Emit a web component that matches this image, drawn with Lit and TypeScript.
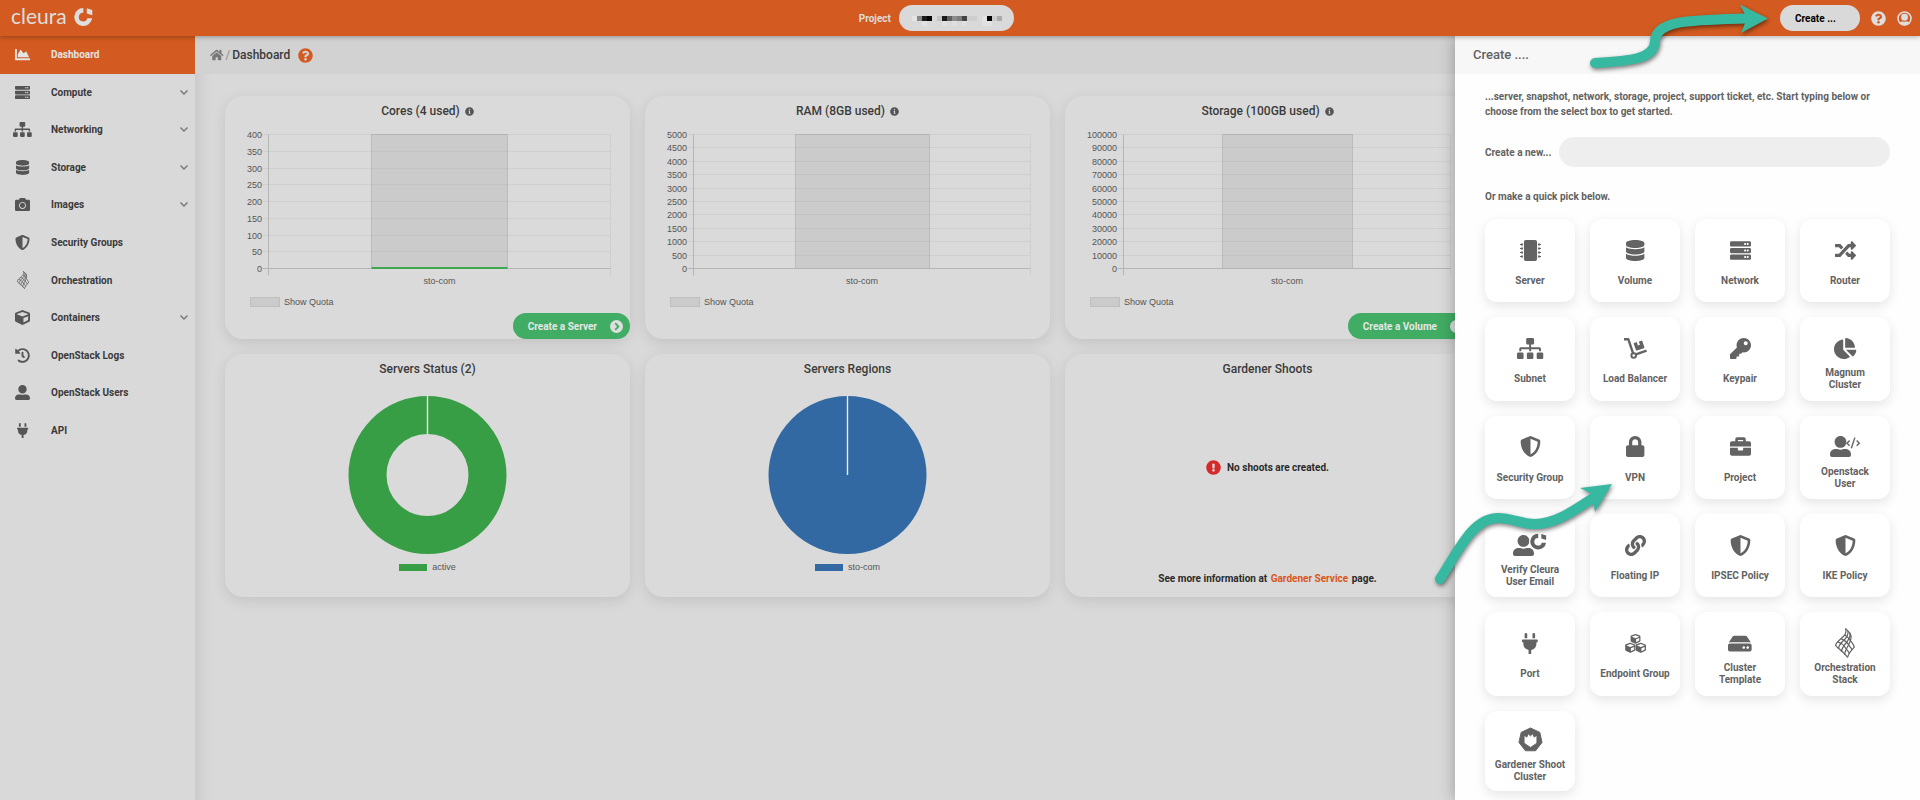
import { LitElement, html, svg, css } from "lit";
import { customElement, property, state } from "lit/decorators.js";
import { classMap } from "lit/directives/class-map.js";

type Glyph = { w: number; h?: number; d?: string; body?: unknown };

const CUBE =
  "M239.1 6.3l-208 78c-18.7 7-31.1 25-31.1 45v225.1c0 18.2 10.3 34.8 26.5 42.9l208 104c13.5 6.8 29.4 6.8 42.9 0l208-104c16.3-8.1 26.5-24.8 26.5-42.9V129.3c0-20-12.4-37.9-31.1-44.9l-208-78C262 2.2 250 2.2 239.1 6.3zM256 68.4l192 72v1.1l-192 78-192-78v-1.1l192-72zm32 356V275.5l160-65v133.9l-160 80z";
const USER =
  "M256 288c79.5 0 144-64.5 144-144S335.5 0 256 0 112 64.5 112 144s64.5 144 144 144zm128 32h-55.1c-22.2 10.2-46.9 16-72.9 16s-50.6-5.8-72.9-16H128C57.3 320 0 377.3 0 448v16c0 26.5 21.5 48 48 48h416c26.5 0 48-21.5 48-48v-16c0-70.7-57.3-128-128-128z";

const serverRow = (y: number) =>
  `M480 ${y + 128}H32c-17.7 0-32-14.3-32-32v-64c0-17.7 14.3-32 32-32h448c17.7 0 32 14.3 32 32v64c0 17.7-14.3 32-32 32zm-48-88c-13.3 0-24 10.7-24 24s10.7 24 24 24 24-10.7 24-24-10.7-24-24-24zm-64 0c-13.3 0-24 10.7-24 24s10.7 24 24 24 24-10.7 24-24-10.7-24-24-24z`;

// The ring with a detached square, used in the brand and as a badge.
const mark = svg`<path d="M9.300 1A9 9 0 1 0 18.200 11.200H13.300A4.300 4.300 0 1 1 9.300 5.800z"/><path d="M12.800 1.300L18.300 3V8.200L12.800 6.600z"/>`;

const GLYPHS: Record<string, Glyph> = {
  area: { w: 512, d: "M500 384c6.6 0 12 5.4 12 12v40c0 6.6-5.4 12-12 12H12c-6.6 0-12-5.4-12-12V76c0-6.6 5.4-12 12-12h40c6.6 0 12 5.4 12 12v308h436zM372.7 159.5L288 216l-85.3-113.7c-5.1-6.8-15.5-6.3-19.9 1L96 248v104h384l-89.9-187.8c-3.2-6.5-11.4-8.7-17.4-4.7z" },
  server: { w: 512, d: serverRow(32) + serverRow(192) + serverRow(352) },
  sitemap: { w: 640, d: "M128 352H32c-17.67 0-32 14.33-32 32v96c0 17.67 14.33 32 32 32h96c17.67 0 32-14.33 32-32v-96c0-17.67-14.33-32-32-32zm-24-80h192v48h48v-48h192v48h48v-57.59c0-21.17-17.23-38.41-38.41-38.41H344v-64h40c17.67 0 32-14.33 32-32V32c0-17.67-14.33-32-32-32H256c-17.67 0-32 14.33-32 32v96c0 17.67 14.33 32 32 32h40v64H94.41C73.23 224 56 241.23 56 262.41V320h48v-48zm264 80h-96c-17.67 0-32 14.33-32 32v96c0 17.67 14.33 32 32 32h96c17.67 0 32-14.33 32-32v-96c0-17.67-14.33-32-32-32zm240 0h-96c-17.67 0-32 14.33-32 32v96c0 17.67 14.33 32 32 32h96c17.67 0 32-14.33 32-32v-96c0-17.67-14.33-32-32-32z" },
  database: { w: 448, d: "M448 73.143v45.714C448 159.143 347.667 192 224 192S0 159.143 0 118.857V73.143C0 32.857 100.333 0 224 0s224 32.857 224 73.143zM448 176v102.857C448 319.143 347.667 352 224 352S0 319.143 0 278.857V176c48.125 33.143 136.208 48.572 224 48.572S399.874 209.143 448 176zm0 160v102.857C448 479.143 347.667 512 224 512S0 479.143 0 438.857V336c48.125 33.143 136.208 48.572 224 48.572S399.874 369.143 448 336z" },
  camera: { w: 512, d: "M512 144v288c0 26.5-21.5 48-48 48H48c-26.5 0-48-21.5-48-48V144c0-26.5 21.5-48 48-48h88l12.3-32.9c7-18.7 24.9-31.1 44.9-31.1h125.5c20 0 37.9 12.4 44.9 31.1L376 96h88c26.5 0 48 21.5 48 48zM376 288c0-66.2-53.8-120-120-120s-120 53.8-120 120 53.8 120 120 120 120-53.8 120-120zm-32 0c0 48.5-39.5 88-88 88s-88-39.5-88-88 39.5-88 88-88 88 39.5 88 88z" },
  shield: { w: 512, d: "M466.5 83.7l-192-80a48.15 48.15 0 0 0-36.9 0l-192 80C27.7 91.1 16 108.6 16 128c0 198.5 114.5 335.7 221.5 380.3 11.8 4.9 25.1 4.9 36.9 0C360.1 472.6 496 349.3 496 128c0-19.4-11.7-36.9-29.5-44.3zM256.1 446.3l-.1-381 175.9 73.3c-3.3 151.4-82.1 261.1-175.8 307.7z" },
  cube: { w: 512, d: CUBE },
  cubes: {
    w: 512,
    body: svg`<path d=${CUBE} transform="translate(136 24) scale(.47)"/><path d=${CUBE} transform="translate(4 236) scale(.49)"/><path d=${CUBE} transform="translate(260 236) scale(.49)"/>`,
  },
  history: { w: 512, d: "M504 255.531c.253 136.64-111.18 248.372-247.82 248.468-59.015.042-113.223-20.53-155.822-54.911-11.077-8.94-11.905-25.541-1.839-35.607l11.267-11.267c8.609-8.609 22.353-9.551 31.891-1.984C173.062 425.135 212.781 440 256 440c101.705 0 184-82.311 184-184 0-101.705-82.311-184-184-184-48.814 0-93.149 18.969-126.068 49.932l50.754 50.754c10.08 10.08 2.941 27.314-11.313 27.314H24c-8.837 0-16-7.163-16-16V38.627c0-14.254 17.234-21.393 27.314-11.314l49.372 49.372C129.209 34.136 189.552 8 256 8c136.81 0 247.747 110.78 248 247.531zm-180.912 78.784l9.823-12.63c8.138-10.463 6.253-25.542-4.21-33.679L288 256.349V152c0-13.255-10.745-24-24-24h-16c-13.255 0-24 10.745-24 24v135.651l65.409 50.874c10.463 8.137 25.541 6.253 33.679-4.21z" },
  user: { w: 512, d: USER },
  userCode: {
    w: 740,
    body: svg`<path d=${USER}/><g fill="none" stroke="currentColor" stroke-width="34"><path d="M478 112l-62 64 62 64M650 112l64 64-64 64"/><path d="M606 40L520 300"/></g>`,
  },
  userMark: {
    w: 820,
    body: svg`<path d=${USER}/><circle cx="610" cy="160" r="215" class="halo"/><g transform="translate(415 -54) scale(21.5)">${mark}</g>`,
  },
  plug: { w: 384, d: "M320 32a32 32 0 0 0-64 0v96h64zm48 128H16A16 16 0 0 0 0 176v32a16 16 0 0 0 16 16h16v32a160.07 160.07 0 0 0 128 156.8V512h64v-99.2A160.07 160.07 0 0 0 352 256v-32h16a16 16 0 0 0 16-16v-32a16 16 0 0 0-16-16zM128 32a32 32 0 0 0-64 0v96h64z" },
  question: { w: 512, d: "M504 256c0 136.997-111.043 248-248 248S8 392.997 8 256C8 119.083 119.043 8 256 8s248 111.083 248 248zM262.655 90c-54.497 0-89.255 22.957-116.549 63.758-3.536 5.286-2.353 12.415 2.715 16.258l34.699 26.31c5.205 3.947 12.621 3.008 16.665-2.122 17.864-22.658 30.113-35.797 57.303-35.797 20.429 0 45.698 13.148 45.698 32.958 0 14.976-12.363 22.667-32.534 33.976C247.128 238.528 216 254.941 216 296v4c0 6.627 5.373 12 12 12h56c6.627 0 12-5.373 12-12v-1.333c0-28.462 83.186-29.647 83.186-106.667 0-58.002-60.165-102-116.531-102zM256 338c-25.365 0-46 20.635-46 46 0 25.364 20.635 46 46 46s46-20.636 46-46c0-25.365-20.635-46-46-46z" },
  info: { w: 512, d: "M256 8C119.043 8 8 119.083 8 256c0 136.997 111.043 248 248 248s248-111.003 248-248C504 119.083 392.957 8 256 8zm0 110c23.196 0 42 18.804 42 42s-18.804 42-42 42-42-18.804-42-42 18.804-42 42-42zm56 254c0 6.627-5.373 12-12 12h-88c-6.627 0-12-5.373-12-12v-24c0-6.627 5.373-12 12-12h12v-64h-12c-6.627 0-12-5.373-12-12v-24c0-6.627 5.373-12 12-12h64c6.627 0 12 5.373 12 12v100h12c6.627 0 12 5.373 12 12v24z" },
  alert: { w: 512, d: "M504 256c0 136.997-111.043 248-248 248S8 392.997 8 256C8 119.083 119.043 8 256 8s248 111.083 248 248zm-248 50c-25.405 0-46 20.595-46 46s20.595 46 46 46 46-20.595 46-46-20.595-46-46-46zm-43.673-165.346l7.418 136c.347 6.364 5.609 11.346 11.982 11.346h48.546c6.373 0 11.635-4.982 11.982-11.346l7.418-136c.375-6.874-5.098-12.654-11.982-12.654h-63.383c-6.884 0-12.356 5.78-11.981 12.654z" },
  account: {
    w: 512,
    body: svg`<circle cx="256" cy="256" r="222" fill="none" stroke="currentColor" stroke-width="52"/><circle cx="256" cy="212" r="118"/><path d="M70 410C110 366 160 350 200 356Q256 376 312 356C352 350 402 366 442 410A248 248 0 0 1 70 410z"/>`,
  },
  home: { w: 576, d: "M280.37 148.26L96 300.11V464a16 16 0 0 0 16 16l112.06-.29a16 16 0 0 0 15.92-16V368a16 16 0 0 1 16-16h64a16 16 0 0 1 16 16v95.64a16 16 0 0 0 16 16.05L464 480a16 16 0 0 0 16-16V300L295.67 148.26a12.19 12.19 0 0 0-15.3 0zM571.6 251.47L488 182.56V44.05a12 12 0 0 0-12-12h-56a12 12 0 0 0-12 12v72.61L318.47 43a48 48 0 0 0-61 0L4.34 251.47a12 12 0 0 0-1.6 16.9l25.5 31A12 12 0 0 0 45.15 301l235.22-193.74a12.19 12.19 0 0 1 15.3 0L530.9 301a12 12 0 0 0 16.9-1.6l25.5-31a12 12 0 0 0-1.7-16.93z" },
  chip: {
    w: 512,
    body: svg`<rect x="96" width="320" height="512" rx="48"/>${[88, 184, 280, 376].map(
      (y) => svg`<path d="M72 ${y}H30q-6 0-6 6v6H6q-6 0-6 6v12q0 6 6 6h18v6q0 6 6 6h42zM440 ${y}h42q6 0 6 6v6h18q6 0 6 6v12q0 6-6 6h-18v6q0 6-6 6h-42z"/>`,
    )}`,
  },
  random: { w: 512, d: "M504.971 359.029c9.373 9.373 9.373 24.569 0 33.941l-80 79.984c-15.01 15.01-40.971 4.49-40.971-16.971V416h-58.785a12.004 12.004 0 0 1-8.773-3.812l-70.556-75.596 53.333-57.143L352 336h32v-39.981c0-21.438 25.943-31.998 40.971-16.971l80 79.981zM12 176h84l52.781 56.551 53.333-57.143-70.556-75.596A11.999 11.999 0 0 0 122.785 96H12c-6.627 0-12 5.373-12 12v56c0 6.627 5.373 12 12 12zm372 0v39.984c0 21.46 25.961 31.98 40.971 16.971l80-79.984c9.373-9.373 9.373-24.569 0-33.941l-80-79.981C409.943 24.021 384 34.582 384 56.019V96h-58.785a12.004 12.004 0 0 0-8.773 3.812L96 336H12c-6.627 0-12 5.373-12 12v56c0 6.627 5.373 12 12 12h110.785c3.326 0 6.503-1.381 8.773-3.812L352 176h32z" },
  dolly: {
    w: 560,
    body: svg`<g fill="none" stroke="currentColor" stroke-width="58" stroke-linejoin="round"><path d="M0 30h104l120 350"/><circle cx="236" cy="426" r="56" stroke-width="48"/><path d="M290 400L550 308"/></g><path d="M248 122l64-22 26 82 50-16-26-82 62-20q16-5 22 11l50 150q5 16-11 22l-172 58q-16 5-22-11l-52-150q-5-16 9-22z"/>`,
  },
  key: { w: 512, d: "M512 176.001C512 273.203 433.202 352 336 352c-11.22 0-22.19-1.062-32.827-3.069l-24.012 27.014A23.999 23.999 0 0 1 261.223 384H224v40c0 13.255-10.745 24-24 24h-40v40c0 13.255-10.745 24-24 24H24c-13.255 0-24-10.745-24-24v-78.059c0-6.365 2.529-12.47 7.029-16.971l161.802-161.802C163.108 213.814 160 195.271 160 176 160 78.798 238.797.001 335.999 0 433.488-.001 512 78.511 512 176.001zM336 128c0 26.51 21.49 48 48 48s48-21.49 48-48-21.49-48-48-48-48 21.49-48 48z" },
  pie: { w: 544, d: "M527.79 288H290.5l158.03 158.03c6.04 6.04 15.98 6.53 22.19.68 38.7-36.46 65.32-85.61 73.13-140.86 1.34-9.46-6.51-17.85-16.06-17.85zm-15.83-64.8C503.72 103.74 408.26 8.28 288.8.04 279.68-.59 272 7.1 272 16.24V240h223.77c9.14 0 16.82-7.68 16.19-16.8zM224 288V50.71c0-9.55-8.39-17.4-17.84-16.06C86.99 51.49-4.1 155.6.14 280.37 4.5 408.51 114.83 513.59 243.03 511.98c50.4-.63 96.97-16.87 135.26-44.03 7.9-5.6 8.42-17.23 1.57-24.08L224 288z" },
  lock: { w: 448, d: "M400 224h-24v-72C376 68.2 307.8 0 224 0S72 68.2 72 152v72H48c-26.5 0-48 21.5-48 48v192c0 26.5 21.5 48 48 48h352c26.5 0 48-21.5 48-48V272c0-26.5-21.5-48-48-48zm-104 0H152v-72c0-39.7 32.3-72 72-72s72 32.3 72 72v72z" },
  briefcase: { w: 512, d: "M320 336c0 8.84-7.16 16-16 16h-96c-8.84 0-16-7.16-16-16v-48H0v144c0 25.6 22.4 48 48 48h416c25.6 0 48-22.4 48-48V288H320v48zm144-208h-80V80c0-25.6-22.4-48-48-48H176c-25.6 0-48 22.4-48 48v48H48c-25.6 0-48 22.4-48 48v80h512v-80c0-25.6-22.4-48-48-48zm-144 0H192V96h128v32z" },
  link: { w: 512, d: "M326.612 185.391c59.747 59.809 58.927 155.698.36 214.59-.11.12-.24.25-.36.37l-67.2 67.2c-59.27 59.27-155.699 59.262-214.96 0-59.27-59.26-59.27-155.7 0-214.96l37.106-37.106c9.84-9.84 26.786-3.3 27.294 10.606.648 17.722 3.826 35.527 9.69 52.721 1.986 5.822.567 12.262-3.783 16.612l-13.087 13.087c-28.026 28.026-28.905 73.66-1.155 101.96 28.024 28.579 74.086 28.749 102.325.51l67.2-67.19c28.191-28.191 28.073-73.757 0-101.83-3.701-3.694-7.429-6.564-10.341-8.569a16.037 16.037 0 0 1-6.947-12.606c-.396-10.567 3.348-21.456 11.698-29.806l21.054-21.055c5.521-5.521 14.182-6.199 20.584-1.731a152.482 152.482 0 0 1 20.522 17.197zM467.547 44.449c-59.261-59.262-155.69-59.27-214.96 0l-67.2 67.2c-.12.12-.25.25-.36.37-58.566 58.892-59.387 154.781.36 214.59a152.454 152.454 0 0 0 20.521 17.196c6.402 4.468 15.064 3.789 20.584-1.731l21.054-21.055c8.35-8.35 12.094-19.239 11.698-29.806a16.037 16.037 0 0 0-6.947-12.606c-2.912-2.005-6.64-4.875-10.341-8.569-28.073-28.073-28.191-73.639 0-101.83l67.2-67.19c28.239-28.239 74.3-28.069 102.325.51 27.75 28.3 26.872 73.934-1.155 101.96l-13.087 13.087c-4.35 4.35-5.769 10.79-3.783 16.612 5.864 17.194 9.042 34.999 9.69 52.721.509 13.906 17.454 20.446 27.294 10.606l37.106-37.106c59.271-59.259 59.271-155.699.001-214.959z" },
  disk: { w: 576, d: "M576 304v96c0 26.51-21.49 48-48 48H48c-26.51 0-48-21.49-48-48v-96c0-26.51 21.49-48 48-48h480c26.51 0 48 21.49 48 48zm-48-80a79.557 79.557 0 0 1 30.777 6.165L462.25 85.374A48.003 48.003 0 0 0 422.311 64H153.689a48 48 0 0 0-39.938 21.374L17.223 230.165A79.557 79.557 0 0 1 48 224h480zm-48 96c-17.673 0-32 14.327-32 32s14.327 32 32 32 32-14.327 32-32-14.327-32-32-32zm-96 0c-17.673 0-32 14.327-32 32s14.327 32 32 32 32-14.327 32-32-14.327-32-32-32z" },
  flame: {
    w: 20,
    h: 30,
    body: svg`<g fill="none" stroke="currentColor" stroke-width="1.2" stroke-linejoin="round">
      <path d="M10.5 .6C12.5 5 9.500 8 5 11.500C2 14 .6 15.500 .6 18"/>
      <path d="M12.800 2.600C14.200 7 11 10.500 7.500 13.500C5 16 3.600 18 3.400 21"/>
      <path d="M14.800 4.600C16 9 13.500 12 11 15C8.500 18 6.600 20.500 6.400 24"/>
      <path d="M16 7.500C16.400 11 15 14 13.500 17C11.500 20.500 9.800 23.500 9.500 27"/>
      <path d="M19.300 19C17 22 13.500 25 12.600 29.400"/>
      <path d="M10.5 .6C14 3.500 15.800 5.500 16 8.500"/>
      <path d="M9.800 7C12 8.500 14 10 15.400 12.500C17 15 19 16.500 19.300 19.500"/>
      <path d="M6 10.600C9 12 12 14 13.600 16.600C15 19 16.800 20.500 17.200 22"/>
      <path d="M2.600 13.800C6 15 9 17.500 10.600 20C12 22.500 14 24 14.400 25.500"/>
      <path d="M.6 17.500C3 20.500 9.500 24.500 12.600 29.400"/>
    </g>`,
  },
  gardener: {
    w: 26,
    h: 26,
    body: svg`<path fill-rule="evenodd" stroke="currentColor" stroke-linejoin="round" d="M13 1L22.700 5.600 25 16 18.300 24.700H7.700L1 16 3.300 5.600zM6.300 8.500V16.800L13 21.300 19.700 16.800V8.500L16.800 10.500 15.400 7 13 9.200 10.600 7 9.200 10.500z"/>`,
  },
};

const icon = (name: string, cls = "") => {
  const g = GLYPHS[name];
  return html`<svg class="icon ${cls}" viewBox="0 0 ${g.w} ${g.h ?? 512}" aria-hidden="true" fill="currentColor">
    ${g.body ?? svg`<path d=${g.d}/>`}
  </svg>`;
};

const base = css`
  * { box-sizing: border-box; }
  .icon { display: block; flex: none; width: auto; overflow: visible; }
  button, input { font: inherit; color: inherit; border: 0; margin: 0; }
  button { cursor: pointer; }
  a { color: inherit; text-decoration: none; }
`;

@customElement("side-nav")
class SideNav extends LitElement {
  @state() current = "Dashboard";
  items: [string, string, boolean][] = [
    ["area", "Dashboard", false],
    ["server", "Compute", true],
    ["sitemap", "Networking", true],
    ["database", "Storage", true],
    ["camera", "Images", true],
    ["shield", "Security Groups", false],
    ["flame", "Orchestration", false],
    ["cube", "Containers", true],
    ["history", "OpenStack Logs", false],
    ["user", "OpenStack Users", false],
    ["plug", "API", false],
  ];
  static styles = [base, css`
    :host { display: block; background: #d9d9d9; color: #3a3a3a; }
    .list { display: grid; grid-auto-rows: 1fr; min-height: 413px; }
    .item { display: grid; grid-template-columns: 45px 1fr auto; column-gap: 6px; align-items: center; padding-right: 7px; }
    .item.on { background: #d35b21; color: #e4e4e4; }
    .icon { height: 15px; justify-self: center; color: #555; }
    .item.on .icon { color: #e4e4e4; }
    .icon.flame { height: 18px; }
    .chev { width: 8px; height: 5px; fill: none; stroke: #777; stroke-width: 1.4; }
  `];
  render() {
    return html`<nav class="list" aria-label="Main">
      ${this.items.map(([g, label, more]) => html`
        <a href="#" class=${classMap({ item: true, on: label === this.current })}>
          ${icon(g, g)}<span>${label}</span>
          ${more ? html`<svg class="chev" viewBox="0 0 8 5" aria-hidden="true"><path d="M.5 .5L4 4 7.500 .5"/></svg>` : ""}
        </a>`)}
    </nav>`;
  }
}

@customElement("quota-chart")
class QuotaChart extends LitElement {
  @property({ type: Number }) max = 400;
  @property({ type: Number }) step = 50;
  @property({ type: Number }) left = 44;
  @property({ type: Number }) used = 0;
  static styles = [base, css`
    :host { display: block; }
    .plot { display: block; width: 100%; font: 9px "Liberation Sans", Arial, sans-serif; fill: #555; }
    .grid { stroke: #cfcfcf; }
    .axis { stroke: #b4b6b4; }
    .bar { fill: #cbcbcb; stroke: #bcbcbc; }
    .over { stroke: #000; stroke-opacity: 0.04; }
    .used { fill: #3fa652; }
    .legend { display: flex; align-items: center; gap: 4px; margin: 6px 0 0 25px; font: 9px/10px "Liberation Sans", Arial, sans-serif; color: #555; }
    .swatch { width: 30px; height: 10px; background: #cbcbcb; border: 1px solid #bfbfbf; }
  `];
  render() {
    const top = 8.5, bottom = 142.5, right = 385.5, left = this.left - 0.5;
    const w = right - left, n = this.max / this.step;
    const ticks = Array.from({ length: n + 1 }, (_, i) => ({
      v: this.max - i * this.step,
      y: Math.round(top + ((bottom - top) * i) / n - 0.5) + 0.5,
    }));
    const bx = Math.round(left + w * 0.3) + 0.5, bw = Math.round(w * 0.4) - 1;
    return html`
      <svg class="plot" viewBox="0 0 405 165" role="img" aria-label="Quota for sto-com">
        ${ticks.map((t) => svg`<path class="grid" d="M${left - 6} ${t.y}H${right}"/><text x=${left - 6.5} y=${t.y + 3} text-anchor="end">${t.v}</text>`)}
        <path class="grid" d="M${right} ${top}V${bottom + 7}"/>
        <rect class="bar" x=${bx} y=${top} width=${bw} height=${bottom - top}/>
        ${ticks.map((t) => svg`<path class="over" d="M${bx} ${t.y}h${bw}"/>`)}
        <path class="axis" d="M${left} ${top}V${bottom + 7}M${left - 6} ${bottom}H${right}"/>
        <rect class="used" x=${bx} y=${bottom - this.used + 0.5} width=${bw} height=${this.used}/>
        <text x=${left + w / 2} y="158" text-anchor="middle">sto-com</text>
      </svg>
      <div class="legend"><span class="swatch"></span>Show Quota</div>`;
  }
}

@customElement("round-chart")
class RoundChart extends LitElement {
  @property() color = "#389e45";
  @property() label = "";
  @property({ type: Number }) hole = 0;
  static styles = [base, css`
    :host { display: block; }
    .plot { display: block; width: 100%; }
    .cut { stroke: #ececec; stroke-width: 1.4; }
    .legend { display: flex; justify-content: center; align-items: center; gap: 5px; margin-top: 6px; font: 9px/10px "Liberation Sans", Arial, sans-serif; color: #555; }
    .swatch { width: 28px; height: 7px; }
  `];
  render() {
    const r = (79 + this.hole) / 2, t = 79 - this.hole;
    return html`
      <svg class="plot" viewBox="0 0 405 172" role="img" aria-label=${this.label}>
        <circle cx="202.5" cy="91" r=${r} fill="none" stroke=${this.color} stroke-width=${t}/>
        <path class="cut" d="M202.500 12V${91 - this.hole}"/>
      </svg>
      <div class="legend"><span class="swatch" style="background:${this.color}"></span>${this.label}</div>`;
  }
}

@customElement("create-panel")
class CreatePanel extends LitElement {
  tiles: [string, string][] = [
    ["chip", "Server"], ["database", "Volume"], ["server", "Network"], ["random", "Router"],
    ["sitemap", "Subnet"], ["dolly", "Load Balancer"], ["key", "Keypair"], ["pie", "Magnum\nCluster"],
    ["shield", "Security Group"], ["lock", "VPN"], ["briefcase", "Project"], ["userCode", "Openstack\nUser"],
    ["userMark", "Verify Cleura\nUser Email"], ["link", "Floating IP"], ["shield", "IPSEC Policy"], ["shield", "IKE Policy"],
    ["plug", "Port"], ["cubes", "Endpoint Group"], ["disk", "Cluster\nTemplate"], ["flame", "Orchestration\nStack"],
    ["gardener", "Gardener Shoot\nCluster"],
  ];
  static styles = [base, css`
    :host { display: block; background: #fefefe; color: #626262; box-shadow: 0 0 15px rgba(0, 0, 0, 0.3); }
    .head { margin: 0; padding: 0 18px; background: #f7f7f7; font-size: 13px; line-height: 38px; font-weight: 500; }
    .body { padding: 15px 30px 0; }
    .intro { margin: 0 0 18px; line-height: 15px; }
    .field { display: flex; align-items: center; gap: 8px; margin-bottom: 22px; }
    .input { flex: 1; min-width: 0; height: 30px; padding: 0 15px; border-radius: 15px; background: #eee; outline: 0; }
    .hint { margin: 0 0 15px; line-height: 15px; }
    .grid { display: grid; grid-template-columns: repeat(4, 1fr); grid-auto-rows: 1fr; gap: 15px; min-height: 575px; }
    .tile { display: flex; flex-direction: column; align-items: center; padding: 13px 4px 9px; border-radius: 12px; background: #fff; box-shadow: 0 4px 12px rgba(0, 0, 0, 0.1); text-align: center; }
    .tile:last-child { align-self: start; padding: 11px 4px 8px; }
    .slot { display: flex; align-items: center; justify-content: center; height: 36px; color: #636363; }
    .icon { height: 21px; }
    .icon.flame { height: 30px; }
    .icon.gardener { height: 25px; }
    .halo { fill: #fff; }
    .name { display: flex; align-items: center; min-height: 24px; margin-top: 1px; line-height: 12px; white-space: pre-line; }
  `];
  render() {
    return html`
      <h2 class="head">Create ....</h2>
      <div class="body">
        <p class="intro">...server, snapshot, network, storage, project, support ticket, etc. Start typing below or choose from the select box to get started.</p>
        <div class="field"><label for="kind">Create a new...</label><input id="kind" class="input" type="text" /></div>
        <p class="hint">Or make a quick pick below.</p>
        <div class="grid">
          ${this.tiles.map(([g, name]) => html`<button class="tile"><span class="slot">${icon(g, g)}</span><span class="name">${name}</span></button>`)}
        </div>
      </div>`;
  }
}

// Grey levels of the obscured project name, one cell per 5px block: [column, row, shade].
const MOSAIC: [number, number, string][] = [
  [0, 1, "#e4e4e4"], [1, 1, "#888"], [2, 1, "#1c1c1c"], [3, 1, "#060606"], [2, 2, "#e2e2e2"],
  [5, 1, "#c4c4c4"], [6, 1, "#1a1a1a"], [7, 1, "#606060"], [8, 1, "#8c8c8c"], [9, 1, "#7e7e7e"], [10, 1, "#444"],
  [11, 1, "#cecece"], [12, 1, "#cecece"], [6, 2, "#e0e0e0"], [8, 2, "#e0e0e0"], [10, 2, "#e0e0e0"],
  [14, 1, "#e2e2e2"], [15, 1, "#000"], [16, 1, "#ccc"], [17, 1, "#aaa"], [14, 2, "#e0e0e0"], [15, 2, "#e2e2e2"],
];

@customElement("app-root")
class AppRoot extends LitElement {
  static styles = [base, css`
    :host { display: block; font: 700 10px/15px Roboto, "Liberation Sans", sans-serif; color: #3a3a3a; }
    .app { position: relative; display: flex; flex-direction: column; min-height: 100vh; overflow: hidden; background: #d9d9d9; }
    .top { position: relative; z-index: 3; display: flex; justify-content: space-between; align-items: center; height: 36px; padding: 0 8px 0 11px; background: #d35b21; color: #dedede; box-shadow: 0 1px 5px rgba(0, 0, 0, 0.3); }
    .brand { display: flex; align-items: center; gap: 7px; font: 21px/24px Lato, sans-serif; padding-bottom: 4px; }
    .brand .mark { width: 19px; height: 19px; fill: #dedede; }
    .project { display: flex; align-items: center; gap: 8px; }
    .pill { height: 26px; border-radius: 13px; background: #d9d9d9; }
    .name { display: flex; align-items: center; padding: 0 12px 0 13px; }
    .tools { display: flex; align-items: center; justify-content: flex-end; gap: 11px; }
    .tools .icon { height: 15px; }
    .create { width: 80px; padding: 0 15px; text-align: left; color: #000; }
    .ghost { padding: 0; background: none; }
    .body { flex: 1; display: flex; }
    .side { position: relative; width: 195px; flex: none; }
    .main { flex: 1; min-width: 0; box-shadow: inset 18px 0 16px -14px rgba(0, 0, 0, 0.09); }
    .crumbs { display: flex; align-items: center; height: 38px; padding-left: 15px; background: #d2d2d2; font-size: 12px; font-weight: 500; }
    .crumbs .home { height: 12px; color: #777; }
    .crumbs .slash { padding: 0 2px; color: #999; }
    .crumbs .help { height: 15px; margin-left: 8px; color: #d35b21; }
    .cards { display: grid; grid-template-columns: repeat(4, 1fr); gap: 15px; padding: 22px 30px; }
    .card { display: flex; flex-direction: column; min-height: 243px; padding-top: 8px; border-radius: 18px; background: #dadada; box-shadow: 0 4px 14px rgba(0, 0, 0, 0.1); }
    .card.first { grid-column-start: 1; }
    .title { display: flex; justify-content: center; align-items: center; gap: 5px; margin: 0 0 7px; font-size: 12px; line-height: 15px; font-weight: 500; }
    .title .icon { height: 9px; color: #555; }
    .cta { display: flex; align-items: center; gap: 13px; height: 26px; margin: auto 0 0 auto; padding: 0 7px 0 15px; border-radius: 13px; background: #41ac64; color: #e6e6e6; }
    .cta .go { width: 13px; height: 13px; }
    .note { display: flex; align-items: center; justify-content: center; gap: 6px; margin: 76px 0 0; color: #2a2a2a; }
    .note .icon { height: 15px; color: #d62a2a; }
    .more { margin: auto 0 11px; text-align: center; color: #2a2a2a; }
    .more .link { padding: 0 1px; color: #d9561a; }
    .panel { position: absolute; z-index: 2; top: 36px; right: 0; bottom: 0; width: 465px; }
    .arrows { position: absolute; z-index: 4; top: 0; right: 0; width: 500px; height: 600px; pointer-events: none; filter: drop-shadow(1px 2px 2px rgba(0, 0, 0, 0.5)); }
  `];
  cta(text: string) {
    return html`<button class="cta">${text}<svg class="go" viewBox="0 0 13 13" aria-hidden="true"><circle cx="6.5" cy="6.5" r="6.5" fill="#dedede"/><path d="M5.200 3.200L8.400 6.500 5.200 9.800" fill="none" stroke="#41ac64" stroke-width="1.800"/></svg></button>`;
  }
  heading(text: string, info = false) {
    return html`<h2 class="title">${text}${info ? icon("info") : ""}</h2>`;
  }
  render() {
    return html`<div class="app">
      <header class="top">
        <a class="brand" href="#">cleura<svg class="mark" viewBox="0 0 19 19" aria-hidden="true">${mark}</svg></a>
        <div class="project">
          <span>Project</span>
          <button class="pill name" aria-label="Select project">
            <svg width="90" height="15" viewBox="0 0 90 15" aria-hidden="true">
              ${MOSAIC.map(([c, r, f]) => svg`<rect x=${c * 5} y=${r * 5} width="5" height="5" fill=${f}/>`)}
            </svg>
          </button>
        </div>
        <div class="tools">
          <button class="pill create">Create ...</button>
          <button class="ghost" aria-label="Help">${icon("question")}</button>
          <button class="ghost" aria-label="Account">${icon("account")}</button>
        </div>
      </header>
      <div class="body">
        <side-nav class="side"></side-nav>
        <main class="main">
          <div class="crumbs">
            <a href="#" aria-label="Home">${icon("home", "home")}</a><span class="slash">/</span><span>Dashboard</span>${icon("question", "help")}
          </div>
          <div class="cards">
            <section class="card">${this.heading("Cores (4 used)", true)}<quota-chart max="400" step="50" left="44" used="2"></quota-chart>${this.cta("Create a Server")}</section>
            <section class="card">${this.heading("RAM (8GB used)", true)}<quota-chart max="5000" step="500" left="49"></quota-chart></section>
            <section class="card">${this.heading("Storage (100GB used)", true)}<quota-chart max="100000" step="10000" left="59"></quota-chart>${this.cta("Create a Volume")}</section>
            <section class="card first">${this.heading("Servers Status (2)")}<round-chart label="active" color="#389e45" hole="41"></round-chart></section>
            <section class="card">${this.heading("Servers Regions")}<round-chart label="sto-com" color="#3369a2"></round-chart></section>
            <section class="card">
              ${this.heading("Gardener Shoots")}
              <p class="note">${icon("alert")}No shoots are created.</p>
              <p class="more">See more information at <a class="link" href="#">Gardener Service</a> page.</p>
            </section>
          </div>
        </main>
      </div>
      <create-panel class="panel"></create-panel>
      <svg class="arrows" viewBox="1420 0 500 600" aria-hidden="true" fill="#36b9a0">
        <g fill="none" stroke="#36b9a0" stroke-width="10" stroke-linecap="round">
          <path d="M1595 63C1630 61 1655 59 1655 41C1656 20 1690 20 1745 18.500"/>
          <path d="M1440 579C1458 552 1472 518 1498 518C1512 518 1520 524 1535 524C1558 524 1578 507 1598 495"/>
        </g>
        <path d="M1768 18.500L1740 4.500 1747 18.500 1741 33z"/>
        <path d="M1612 484L1580 488 1592 494 1595 512z"/>
      </svg>
    </div>`;
  }
}
